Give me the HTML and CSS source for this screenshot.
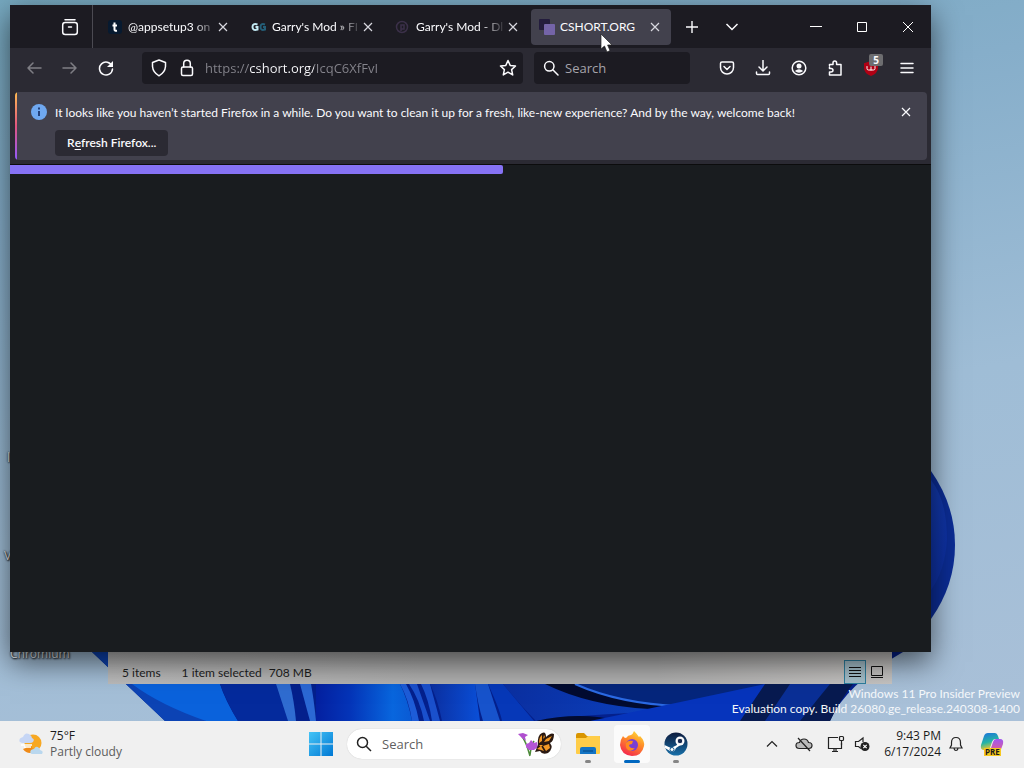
FILE: index.html
```html
<!DOCTYPE html>
<html lang="en">
<head>
    <meta charset="UTF-8">
    <meta name="viewport" content="width=device-width, initial-scale=1.0">
    <title>Desktop</title>
    <link rel="stylesheet" href="styles.css">
</head>
<body>

    <main class="desktop">
        <svg class="wallpaper" viewBox="0 0 1024 721" preserveAspectRatio="none" aria-hidden="true">
            <defs>
                <linearGradient id="petalA" x1="0" y1="0" x2="1" y2="0">
                    <stop offset="0" stop-color="#0420a0"/>
                    <stop offset="0.350" stop-color="#0434b8"/>
                    <stop offset="0.800" stop-color="#0866de"/>
                    <stop offset="1" stop-color="#0a5ad4"/>
                </linearGradient>
                <linearGradient id="petalB" x1="0" y1="0" x2="1" y2="0">
                    <stop offset="0" stop-color="#0b2fa0"/>
                    <stop offset="1" stop-color="#0a4fd8"/>
                </linearGradient>
                <linearGradient id="petalC" x1="0" y1="0" x2="1" y2="1">
                    <stop offset="0" stop-color="#1c49bd"/>
                    <stop offset="1" stop-color="#0a2a9a"/>
                </linearGradient>
            </defs>
            <path d="M931 471Q955 505 955 545Q955 585 931 619L890 660V440Z" fill="#0b2c94"/>
            <path d="M931 480Q947 500 947 540Q945 570 931 590L880 620V440Z" fill="url(#petalC)"/>
            <path d="M92 652L165 721H830Q845 685 903 652Z" fill="#04208c"/>
            <path d="M92 652L165 721H206Q160 690 128 652Z" fill="#0c43b4"/>
            <path d="M132 684Q160 705 206 721H238Q225 700 220 684Z" fill="#0a62dc"/>
            <path d="M220 684Q228 705 238 721H288L276 684Z" fill="#042a9c"/>
            <path d="M276 684L288 721H296Q294 700 290 684Z" fill="#2f6cd0"/>
            <path d="M300 684L310 721H316Q314 700 311 684Z" fill="#2b68d4"/>
            <path d="M316 684V721H412Q408 700 400 684Z" fill="url(#petalA)"/>
            <path d="M400 684Q409 700 412 721H419Q415 700 406 684Z" fill="#1d5cd8"/>
            <path d="M409 684Q420 700 424 721H430L417 684Z" fill="#1a50cc"/>
            <path d="M421 684Q429 700 432 721H440L430 684Z" fill="#1a50cc"/>
            <path d="M430 684Q438 700 442 721H480L475 684Z" fill="url(#petalB)"/>
            <path d="M475 684Q478 705 483 721H500L488 684Z" fill="#1753cc"/>
            <path d="M488 684Q500 710 502 721H534L503 684Z" fill="#0638b8"/>
            <path d="M503 684Q520 705 536 721Q600 712 690 712L790 684Z" fill="url(#petalB)"/>
            <path d="M545 684Q590 706 650 709Q710 704 750 684Z" fill="#020b30"/>
            <path d="M575 684Q620 704 680 706Q740 700 770 684" fill="#05267c" stroke="#2b6ae4" stroke-width="2"/>
            <path d="M536 721Q580 711 620 721Z" fill="#020b30"/>
            <path d="M590 721Q690 700 765 684L755 721Z" fill="#0634bc"/>
            <path d="M765 684L740 721H830Q840 700 853 684Z" fill="#071a50"/>
            <path d="M790 684L765 721H800L830 684Z" fill="#0a2f96"/>
        </svg>

        <span class="icon-label label-first">l</span>
        <span class="icon-label label-second">V</span>
        <span class="icon-label label-chromium">Chromium</span>

        <!-- file explorer, only the status bar shows -->
        <section class="explorer">
            <div class="status-bar">
                <span>5 items</span>
                <span class="selected">1 item selected</span>
                <span>708 MB</span>
                <div class="view-buttons">
                    <button class="view active" aria-label="Details view">
                        <svg width="14" height="14" viewBox="0 0 14 14"><path d="M1 2.500h12M1 5.500h12M1 8.500h12M1 11.500h12" stroke="#111"/></svg>
                    </button>
                    <button class="view" aria-label="Large icons view">
                        <svg width="14" height="14" viewBox="0 0 14 14"><path d="M1.500 1.500h11v9h-11zM1 12.500h12" fill="none" stroke="#111"/></svg>
                    </button>
                </div>
            </div>
        </section>

        <section class="browser">
            <div class="tab-strip">
                <div class="recent">
                    <button class="icon-btn" aria-label="Firefox View">
                        <svg width="18" height="18" viewBox="0 0 18 18" fill="none" stroke="#fbfbfe" stroke-width="1.500" stroke-linecap="round"><path d="M4 1.700h10"/><rect x="1.700" y="4.500" width="14.600" height="12" rx="2.500"/><path d="M7.500 9h3"/></svg>
                    </button>
                </div>
                <div class="tabs" role="tablist">
                    <div class="tab" role="tab">
                        <svg class="favicon" viewBox="0 0 16 16"><rect x="1" y="1" width="14" height="14" rx="3" fill="#071a30"/><path d="M7.500 3.500V10.500Q7.500 12 10 11.700M5.500 6.500H10" fill="none" stroke="#fff" stroke-width="2"/></svg>
                        <span class="tab-title">@appsetup3 on</span>
                        <button class="tab-close" aria-label="Close tab"><svg width="10" height="10" viewBox="0 0 10 10"><path d="M1 1l8 8M9 1l-8 8" stroke="#d8d8df" stroke-width="1.200"/></svg></button>
                    </div>
                    <div class="tab" role="tab">
                        <svg class="favicon" viewBox="0 0 16 16" fill="none" stroke-width="2"><path d="M6.500 5.500Q1.500 4 1.500 8T6.500 10.500V8H4.500" stroke="#c3eaf4"/><path d="M14 5.500Q9.500 4 9.500 8T14 10.500V8H12" stroke="#245f79"/></svg>
                        <span class="tab-title">Garry's Mod » FI</span>
                        <button class="tab-close" aria-label="Close tab"><svg width="10" height="10" viewBox="0 0 10 10"><path d="M1 1l8 8M9 1l-8 8" stroke="#d8d8df" stroke-width="1.200"/></svg></button>
                    </div>
                    <div class="tab" role="tab">
                        <svg class="favicon" viewBox="0 0 16 16" fill="none" stroke="#3b3049" stroke-width="1.500"><circle cx="7" cy="8" r="5.500"/><path d="M6 12V6h3v4H6"/></svg>
                        <span class="tab-title">Garry's Mod - Dl</span>
                        <button class="tab-close" aria-label="Close tab"><svg width="10" height="10" viewBox="0 0 10 10"><path d="M1 1l8 8M9 1l-8 8" stroke="#d8d8df" stroke-width="1.200"/></svg></button>
                    </div>
                    <div class="tab current" role="tab" aria-selected="true">
                        <svg class="favicon" viewBox="0 0 16 16"><rect x="0" y="0" width="11" height="11" rx="1" fill="#231c3d"/><rect x="5" y="5" width="11" height="11" rx="1" fill="#7464a8"/></svg>
                        <span class="tab-title">CSHORT.ORG</span>
                        <button class="tab-close" aria-label="Close tab"><svg width="10" height="10" viewBox="0 0 10 10"><path d="M1 1l8 8M9 1l-8 8" stroke="#d8d8df" stroke-width="1.200"/></svg></button>
                        <svg class="cursor" width="14" height="20" viewBox="0 0 14 20"><path d="M1 1V16L4.500 13L7 19L10 17.600L7.600 12H12Z" fill="#fff" stroke="#222" stroke-width="0.700"/></svg>
                    </div>
                </div>
                <button class="strip-btn" aria-label="New tab"><svg width="12" height="12" viewBox="0 0 12 12"><path d="M6 0v12M0 6h12" stroke="#fbfbfe" stroke-width="1.400"/></svg></button>
                <button class="strip-btn" aria-label="List all tabs"><svg width="14" height="8" viewBox="0 0 14 8"><path d="M1.500 1l5.500 5.500L12.500 1" fill="none" stroke="#fbfbfe" stroke-width="1.500"/></svg></button>
                <div class="window-buttons">
                    <button aria-label="Minimize"><svg width="12" height="12" viewBox="0 0 12 12"><path d="M0 5.500h12" stroke="#fff"/></svg></button>
                    <button aria-label="Maximize"><svg width="12" height="12" viewBox="0 0 12 12"><path d="M1.500 1.500h9v9h-9z" fill="none" stroke="#fff"/></svg></button>
                    <button aria-label="Close"><svg width="12" height="12" viewBox="0 0 12 12"><path d="M1 1l10 10M11 1L1 11" stroke="#fff"/></svg></button>
                </div>
            </div>

            <div class="toolbar">
                <button class="icon-btn dim" aria-label="Back"><svg width="16" height="16" viewBox="0 0 16 16"><path d="M15 8H2M7 3L2 8l5 5"/></svg></button>
                <button class="icon-btn dim" aria-label="Forward"><svg width="16" height="16" viewBox="0 0 16 16"><path d="M1 8h13M9 3l5 5-5 5"/></svg></button>
                <button class="icon-btn" aria-label="Reload"><svg width="16" height="16" viewBox="0 0 16 16"><path d="M14 6A6.500 6.500 0 1 0 14.500 9"/><path d="M15 1v6H9z" fill="#fbfbfe" stroke="none"/></svg></button>
                <div class="url-bar">
                    <svg width="16" height="18" viewBox="0 0 16 18"><path d="M8 1L14.500 3.500V7.500Q14 13.500 8 16.800Q2 13.500 1.500 7.500V3.500Z"/></svg>
                    <svg width="16" height="18" viewBox="0 0 16 18"><rect x="2.500" y="8" width="11" height="8.500" rx="1.500"/><path d="M4.700 8V4.500a3.300 3.300 0 0 1 6.600 0V8"/></svg>
                    <input class="url" type="text" aria-label="Address" value="https://cshort.org/IcqC6XfFvI">
                    <button class="star" aria-label="Bookmark this page"><svg width="18" height="18" viewBox="0 0 18 18"><path d="M9 1.500l2.200 4.900 5.300.6-3.900 3.600 1.100 5.300L9 13.200l-4.700 2.700 1.100-5.300L1.500 7l5.300-.6z"/></svg></button>
                </div>
                <div class="search-bar">
                    <svg width="16" height="16" viewBox="0 0 16 16"><circle cx="6.300" cy="6.300" r="4.700"/><path d="M9.800 9.800L15 15"/></svg>
                    <input type="text" aria-label="Search" placeholder="Search">
                </div>
                <div class="actions">
                    <button class="icon-btn" aria-label="Save to Pocket"><svg width="16" height="16" viewBox="0 0 16 16"><path d="M3 2h10a1.500 1.500 0 0 1 1.500 1.500V7.500a6.500 6.500 0 0 1-13 0V3.500A1.500 1.500 0 0 1 3 2z"/><path d="M5 6.500l3 3 3-3"/></svg></button>
                    <button class="icon-btn" aria-label="Downloads"><svg width="16" height="16" viewBox="0 0 16 16"><path d="M8 0.500V10.500M4 7l4 4 4-4M1.500 12v1.500a1 1 0 0 0 1 1h11a1 1 0 0 0 1-1V12"/></svg></button>
                    <button class="icon-btn" aria-label="Account"><svg width="16" height="16" viewBox="0 0 16 16"><circle cx="8" cy="8" r="6.800"/><circle cx="8" cy="6" r="2.500" fill="#fbfbfe" stroke="none"/><path d="M3.800 11Q8 7.500 12.200 11Q8 14.500 3.800 11z" fill="#fbfbfe" stroke="none"/></svg></button>
                    <button class="icon-btn" aria-label="Extensions"><svg width="16" height="16" viewBox="0 0 16 16"><path d="M2.500 5.500V4.500H6V3Q6 1 7.800 1T9.600 3V4.500H14V15H2.500V12H4Q6 12 6 10.300T4 8.500H2.500V7"/></svg></button>
                    <button class="icon-btn" aria-label="uBlock Origin"><svg width="16" height="16" viewBox="0 0 16 16"><path d="M8 1l7 2.200V8q0 5-7 8-7-3-7-8V3.200z" fill="#b00014" stroke="none"/><path d="M4 6.500V8.500Q4 10 5.500 10H10.500Q12 10 12 8.500V6.500M8 7V10" stroke="#fff" stroke-width="1"/></svg><span class="badge">5</span></button>
                    <button class="icon-btn" aria-label="Menu"><svg width="16" height="16" viewBox="0 0 16 16"><path d="M2 3.500h12M2 8h12M2 12.500h12"/></svg></button>
                </div>
            </div>

            <div class="notice-wrap">
                <div class="notice">
                    <svg class="info" width="16" height="16" viewBox="0 0 16 16"><circle cx="8" cy="8" r="8" fill="#6fa8f0"/><path d="M8 7v5M8 3.500v2" stroke="#22407a" stroke-width="2"/></svg>
                    <div class="notice-body">
                        <p>It looks like you haven’t started Firefox in a while. Do you want to clean it up for a fresh, like-new experience? And by the way, welcome back!</p>
                        <button class="refresh">R<u>e</u>fresh Firefox...</button>
                    </div>
                    <button class="notice-close" aria-label="Dismiss"><svg width="10" height="10" viewBox="0 0 10 10"><path d="M1 1l8 8M9 1l-8 8" stroke="#fbfbfe" stroke-width="1.200"/></svg></button>
                </div>
            </div>

            <div class="page">
                <div class="loading-bar"></div>
            </div>
        </section>

        <p class="watermark">Windows 11 Pro Insider Preview<br>Evaluation copy. Build 26080.ge_release.240308-1400</p>
    </main>

    <footer class="taskbar">
        <button class="weather">
            <svg width="26" height="26" viewBox="0 0 26 26">
                <circle cx="15" cy="12" r="8.500" fill="#f7a823"/>
                <path d="M5 18Q9 24 17 21L13 15Z" fill="#ef8a17"/>
                <path d="M4 12Q0 11 2 7.500Q4 6 5 6Q7 1 11 3Q14 5 14 7Q17 8 15 11Q14 12 12 12Z" fill="#c6d6f5"/>
                <path d="M3 14h11M6 16h7" stroke="#fff" stroke-width="1.500"/>
                <path d="M14 23Q11 22 13 19Q15 18 16 18Q18 14 21 17Q22 18 22 19Q26 20 24 23Z" fill="#b9d7ee"/>
            </svg>
            <span class="weather-text"><span class="temp">75°F</span><span class="sky">Partly cloudy</span></span>
        </button>

        <nav class="apps">
            <button class="app" aria-label="Start">
                <svg width="24" height="24" viewBox="0 0 24 24"><defs><linearGradient id="win" x1="0" y1="0" x2="1" y2="1"><stop offset="0" stop-color="#45c4f6"/><stop offset="1" stop-color="#0078d4"/></linearGradient></defs><path d="M0 0h11.500v11.500H0zM12.500 0H24v11.500H12.500zM0 12.500h11.500V24H0zM12.500 12.500H24V24H12.500z" fill="url(#win)"/></svg>
            </button>
            <div class="task-search">
                <svg width="16" height="16" viewBox="0 0 16 16" fill="none" stroke="#222" stroke-width="1.500"><circle cx="6.500" cy="6.500" r="5"/><path d="M10.200 10.200L15 15"/></svg>
                <input type="text" aria-label="Search" placeholder="Search">
                <svg width="38" height="26" viewBox="0 0 38 26">
                    <path d="M4 4Q9 10 13 25M17 10Q14 15 13 24" fill="none" stroke="#4c8a3a" stroke-width="1.500"/>
                    <path d="M1 3l5-1 5 2-3 2 1 4-4-3z" fill="#b04fd0"/>
                    <path d="M9 13l3-1 2-3 3 3 3-1 1 5-4 3-5 0-3-3z" fill="#b455d6"/>
                    <path d="M21 14Q20 4 25 2Q29 0 29 6Q34 1 37 3Q37 10 33 12Q37 17 31 22Q25 24 23 20L18 21Z" fill="#2b1a12"/>
                    <path d="M22 12Q22 6 25 4L25 10ZM27 11L29 8L35 5L32 10ZM26 15L32 13L33 17L29 20ZM20 18L24 15L27 20L24 19ZM26 8L27 4L28 6ZM22 14H26L24 16Z" fill="#f59a26"/>
                </svg>
            </div>
            <button class="app" aria-label="File Explorer">
                <svg width="26" height="24" viewBox="0 0 26 24"><path d="M1 3Q1 1 3 1H9L12 4H24Q25 4 25 6V20H1Z" fill="#d99500"/><path d="M1 6H11L13 4H24Q25 4 25 6V21Q25 22 24 22H2Q1 22 1 21Z" fill="#ffcd48"/><path d="M5 22V17Q5 15 7 15H19Q21 15 21 17V22Z" fill="#1374c4"/><path d="M8 19H18" stroke="#0a5699" stroke-width="1.500"/></svg>
                <span class="dot"></span>
            </button>
            <button class="app open" aria-label="Firefox">
                <svg width="26" height="26" viewBox="0 0 26 26"><defs><linearGradient id="fox" x1="0.800" y1="0" x2="0.300" y2="1"><stop offset="0" stop-color="#ffdf3c"/><stop offset="0.450" stop-color="#ff8a28"/><stop offset="1" stop-color="#f4264f"/></linearGradient></defs><path d="M4 5Q5 7 7 7Q9 4 12 4Q14 3 15 0Q18 3 20 6L21 5Q26 10 25 15Q23 25 13 25Q2 24 1 14Q1 9 4 5Z" fill="url(#fox)"/><circle cx="13" cy="14" r="6" fill="#7a3fd4"/><path d="M7 12Q9 9 14 10L13 13Q10 13 10 15Q12 18 16 17Q13 21 9 19Q6 17 7 12Z" fill="#ff8a1f"/></svg>
                <span class="dot"></span>
            </button>
            <button class="app" aria-label="Steam">
                <svg width="24" height="24" viewBox="0 0 24 24"><defs><linearGradient id="steam" x1="0" y1="0" x2="0" y2="1"><stop offset="0" stop-color="#0e1b3d"/><stop offset="1" stop-color="#176fa8"/></linearGradient></defs><circle cx="12" cy="12" r="11.500" fill="url(#steam)"/><path d="M0.500 13L7 16L13 13L15 9L18 12L12 16L11 18Q9 21 6 19L1 16Z" fill="#fff"/><circle cx="16" cy="9" r="4.500" fill="#fff"/><circle cx="16" cy="9" r="2.800" fill="#16284f" stroke="#fff"/><circle cx="8" cy="17.500" r="2" fill="none" stroke="#195d92"/></svg>
                <span class="dot"></span>
            </button>
        </nav>

        <div class="tray">
            <button class="tray-btn" aria-label="Show hidden icons"><svg width="12" height="8" viewBox="0 0 12 8"><path d="M1 6.500l5-5 5 5"/></svg></button>
            <button class="tray-btn" aria-label="OneDrive"><svg width="18" height="16" viewBox="0 0 18 16"><path d="M4.500 12.500Q1 12.500 1 9.500T4.500 6.500Q5.500 3 9 3T13.500 6.500Q17 6.500 17 9.500T13.500 12.500Z" fill="#bbb"/><path d="M3 2l12 13"/></svg></button>
            <button class="tray-btn" aria-label="Network"><svg width="18" height="18" viewBox="0 0 18 18"><path d="M11 2.500H1.500V13.500H14.500V8M5 16.500H11M7 13.500V16M9 13.500V16"/><rect x="12.500" y="1.500" width="4" height="4" rx="1"/><path d="M14.500 5.500V10"/></svg></button>
            <button class="tray-btn sound" aria-label="Volume"><svg width="16" height="16" viewBox="0 0 16 16"><path d="M9 6V2L4.500 5.500H1.500V10.500H4.500L7 12.500"/><circle cx="11" cy="10.500" r="4.500" fill="#222" stroke="none"/><path d="M9.300 8.800l3.400 3.400M12.700 8.800l-3.400 3.400" stroke="#fff"/></svg></button>
            <button class="clock"><time datetime="2024-06-17T21:43">9:43 PM<br>6/17/2024</time></button>
            <button class="tray-btn bell" aria-label="Notifications"><svg width="14" height="16" viewBox="0 0 14 16"><path d="M7 1.500Q11.500 1.500 11.500 6.500V9L13 12H1L2.500 9V6.500Q2.500 1.500 7 1.500zM5 12.500Q5.500 14.500 7 14.500T9 12.500"/></svg></button>
            <button class="copilot" aria-label="Copilot (preview)">
                <svg width="24" height="24" viewBox="0 0 24 24"><defs><linearGradient id="cpA" x1="0" y1="0" x2="0.300" y2="1"><stop offset="0" stop-color="#1b6fe0"/><stop offset="0.600" stop-color="#25b5a5"/><stop offset="1" stop-color="#f2c52c"/></linearGradient><linearGradient id="cpB" x1="0" y1="0" x2="0" y2="1"><stop offset="0" stop-color="#a057f0"/><stop offset="1" stop-color="#f2617b"/></linearGradient></defs><path d="M8 1H15Q17 1 18 4L19 7H15Q13 7 12 10L10 16Q9 18 6 18H4Q0 18 1 13L4 4Q5 1 8 1Z" fill="url(#cpA)"/><path d="M16 7H20Q24 7 23 12L20 20Q19 23 16 23H10Q8 23 7 19Q10 19 11 16L13 10Q14 7 16 7Z" fill="url(#cpB)"/></svg>
                <span class="pre">PRE</span>
            </button>
        </div>
    </footer>

</body>
</html>
```

FILE: styles.css
```css
* {
    box-sizing: border-box;
}
body {
    margin: 0;
    height: 100vh;
    display: flex;
    flex-direction: column;
    font-family: "Open Sans", "Noto Sans", sans-serif;
    font-size: 12px;
    overflow: hidden;
}
button, input {
    font: inherit;
    color: inherit;
    background: none;
    border: none;
    padding: 0;
    margin: 0;
}
input {
    min-width: 0;
    flex: 1;
    outline: none;
}
button {
    display: flex;
    align-items: center;
    justify-content: center;
}
p {
    margin: 0;
}

/* desktop */
.desktop {
    position: relative;
    flex: 1;
    overflow: hidden;
    background: linear-gradient(170deg, #76a8bf 0%, #86aeca 25%, #9fbdd6 60%, #a9c0d8 100%);
}
.wallpaper {
    position: absolute;
    inset: 0;
    width: 100%;
    height: 100%;
}
.icon-label {
    position: absolute;
    color: #e4e8ee;
    line-height: 16px;
    text-shadow: 0 0 2px #000, 1px 1px 2px #000;
}
.label-first {
    left: 7px;
    top: 450px;
}
.label-second {
    left: 4px;
    top: 548px;
}
.label-chromium {
    left: 10px;
    bottom: 59px;
}
.watermark {
    position: absolute;
    right: 4px;
    bottom: 5px;
    color: #f4f7fa;
    font-family: Lato, "Open Sans", sans-serif;
    line-height: 15px;
    text-align: right;
}

/* file explorer */
.explorer {
    position: absolute;
    left: 108px;
    right: 132px;
    bottom: 37px;
    height: 60px;
    display: flex;
    align-items: flex-end;
    background: linear-gradient(to right, #bcbcbc, #b0b0b0 40%, #b0b0b0 70%, #c8c6c4);
    font-family: Lato, "Open Sans", sans-serif;
}
.status-bar {
    flex: 1;
    height: 24px;
    display: flex;
    align-items: center;
    padding: 0 4px 0 14px;
    color: #1e1e1e;
}
.selected {
    margin: 0 7px 0 21px;
}
.view-buttons {
    display: flex;
    margin-left: auto;
}
.view {
    width: 22px;
    height: 24px;
}
.view.active {
    border: 1px solid #2d7f9f;
    background: #a5c0cb;
}

/* browser */
.browser {
    position: absolute;
    left: 10px;
    right: 93px;
    top: 5px;
    bottom: 69px;
    display: flex;
    flex-direction: column;
    background: #2b2a33;
    color: #fbfbfe;
    box-shadow: 0 10px 28px rgba(0, 0, 0, 0.6);
}
.tab-strip {
    display: flex;
    align-items: center;
    height: 43px;
    background: #1c1b22;
}
.recent {
    width: 83px;
    height: 43px;
    display: flex;
    align-items: center;
    justify-content: flex-end;
    padding-right: 4px;
    border-right: 1px solid #4b4a52;
}
.icon-btn {
    position: relative;
    width: 36px;
    height: 36px;
}
.toolbar svg {
    flex: none;
    fill: none;
    stroke: #fbfbfe;
    stroke-width: 1.5;
    stroke-linejoin: round;
    stroke-linecap: round;
}
.dim {
    opacity: 0.4;
}
.tabs {
    display: flex;
    gap: 4px;
    padding: 0 1px 0 6px;
}
.tab {
    position: relative;
    width: 140px;
    height: 36px;
    display: flex;
    align-items: center;
    gap: 5px;
    padding: 0 5px 0 8px;
    border-radius: 4px;
}
.tab.current {
    background: #42414d;
}
.favicon {
    flex: none;
    width: 16px;
    height: 16px;
}
.tab-title {
    flex: 1;
    white-space: nowrap;
    font-family: Lato, "Open Sans", sans-serif;
    -webkit-mask-image: linear-gradient(to right, #000 65px, transparent 90px);
    mask-image: linear-gradient(to right, #000 65px, transparent 90px);
}
.current .tab-title {
    -webkit-mask-image: none;
    mask-image: none;
}
.tab-close {
    width: 22px;
    height: 24px;
    margin-left: -5px;
}
.cursor {
    position: absolute;
    left: 69px;
    top: 24px;
}
.strip-btn {
    width: 40px;
    height: 36px;
}
.window-buttons {
    display: flex;
    margin-left: auto;
}
.window-buttons button {
    width: 46px;
    height: 43px;
}
.toolbar {
    display: flex;
    align-items: center;
    height: 40px;
    padding: 0 6px;
}
.url-bar, .search-bar {
    display: flex;
    align-items: center;
    height: 32px;
    border-radius: 4px;
    background: #1c1b22;
    font-size: 13px;
}
.url-bar {
    flex: 1;
    gap: 12px;
    margin-left: 18px;
    padding: 0 6px 0 9px;
}
/* the host part is brighter than the rest of the address */
.url {
    margin-left: -2px;
    background: linear-gradient(to right, #85848c 45px, #fbfbfe 45px, #fbfbfe 109px, #85848c 109px);
    -webkit-background-clip: text;
    background-clip: text;
    -webkit-text-fill-color: transparent;
}
.search-bar {
    width: 156px;
    gap: 6px;
    margin-left: 11px;
    padding: 0 9px;
}
.search-bar input::placeholder {
    color: #a5a4ab;
    opacity: 1;
}
.actions {
    display: flex;
    margin-left: 19px;
}
.badge {
    position: absolute;
    right: 6px;
    top: 4px;
    width: 14px;
    height: 12px;
    border-radius: 2px;
    background: #6d6d70;
    font-size: 10px;
    font-weight: bold;
    line-height: 12px;
}
.notice-wrap {
    padding: 4px 4px 4px 5px;
    border-bottom: 1px solid #0c0c0d;
}
.notice {
    position: relative;
    display: flex;
    align-items: flex-start;
    height: 68px;
    padding: 12px 11px 0 16px;
    border-radius: 4px;
    background: #42414d;
    overflow: hidden;
}
.notice::before {
    content: "";
    position: absolute;
    left: 0;
    top: 0;
    bottom: 0;
    width: 2px;
    background: linear-gradient(#ffbd4f, #e2557f, #9059ff);
}
.notice-body {
    flex: 1;
    padding-left: 8px;
    font-family: Lato, "Open Sans", sans-serif;
    line-height: 18px;
    white-space: nowrap;
}
.refresh {
    height: 26px;
    margin-top: 8px;
    padding: 0 12px;
    border-radius: 4px;
    background: #2b2a33;
    font-weight: 600;
}
.refresh u {
    text-underline-offset: 2px;
}
.notice-close {
    width: 20px;
    height: 16px;
}
.page {
    flex: 1;
    background: #191c1f;
}
.loading-bar {
    width: 493px;
    height: 9px;
    border-radius: 0 2px 2px 0;
    background: #8672f5;
}

/* taskbar */
.taskbar {
    display: flex;
    align-items: center;
    height: 47px;
    padding-bottom: 1px;
    background: #f0f0f0;
    color: #1b1b1b;
}
.weather {
    flex: 0 0 299px;
    justify-content: flex-start;
    gap: 6px;
    padding-left: 18px;
    text-align: left;
    line-height: 16px;
}
.weather-text {
    display: flex;
    flex-direction: column;
}
.sky {
    color: #5c5c5c;
}
.apps {
    display: flex;
    align-items: center;
}
.app {
    position: relative;
    width: 36px;
    height: 38px;
    margin: 0 4px;
    border-radius: 4px;
}
.app.open {
    background: #fbfbfb;
}
.dot {
    position: absolute;
    left: 15px;
    bottom: 0;
    width: 6px;
    height: 3px;
    border-radius: 2px;
    background: #858585;
}
.open .dot {
    left: 10px;
    width: 16px;
    background: #0067c0;
}
.task-search {
    display: flex;
    align-items: center;
    gap: 10px;
    width: 214px;
    height: 30px;
    margin: 0 5px 0 4px;
    padding: 0 6px 0 9px;
    border-radius: 15px;
    background: #fff;
    box-shadow: 0 0 1px #bbb;
    font-size: 13px;
}
.task-search input::placeholder {
    color: #5f5f5f;
    opacity: 1;
}
.tray {
    display: flex;
    align-items: center;
    margin-left: auto;
    padding-right: 19px;
}
.tray-btn {
    width: 32px;
    height: 36px;
}
.tray-btn svg {
    fill: none;
    stroke: #222;
    stroke-width: 1.2;
}
.sound {
    width: 20px;
}
.clock {
    width: 69px;
    justify-content: flex-end;
    line-height: 16px;
    text-align: right;
}
.bell {
    width: 30px;
}
.copilot {
    position: relative;
    width: 26px;
    height: 26px;
    margin-left: 8px;
}
.pre {
    position: absolute;
    left: 5px;
    bottom: 1px;
    padding: 0 1px;
    background: #f7c81e;
    font-size: 8px;
    font-weight: bold;
    line-height: 8px;
}
```
